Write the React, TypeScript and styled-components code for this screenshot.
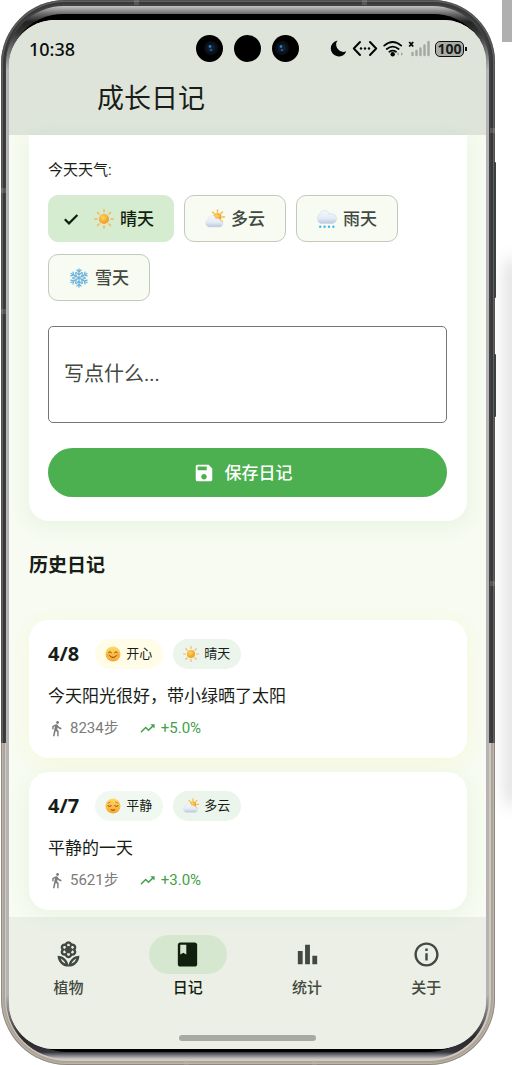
import React, { useState } from "react";
import styled, { createGlobalStyle, css } from "styled-components";
import {
  MdBook,
  MdDirectionsWalk,
  MdInfoOutline,
  MdOutlineLocalFlorist,
  MdSave,
  MdTrendingUp,
} from "react-icons/md";

const GlobalStyle = createGlobalStyle`
  * { box-sizing: border-box; }
  body {
    margin: 0;
    background: #fff;
    color: #181d17;
    font-family: Roboto, "Noto Sans CJK SC", sans-serif;
    overflow-x: hidden;
  }
  svg { display: block; flex: none; }
`;

/* ---------- device ---------- */

const Page = styled.div`
  display: flex;
  overflow: hidden;
`;

const Rim = styled.div`
  position: relative;
  flex: 1;
  min-width: 0;
  margin-left: 1px;
  padding: 6px 6px 6px 5px;
  border-radius: 64px 62px 66px 66px;
  background: linear-gradient(#3f4142 0 743px, #d2c9bd 743px);
  box-shadow: inset 0 0 0 1px rgba(60, 55, 50, 0.35), inset 0 0 0 2px rgba(255, 255, 255, 0.2),
    inset 0 0 0 4px rgba(40, 34, 28, 0.22);
`;

const SideKey = styled.span<{ $top: number; $height: number }>`
  position: absolute;
  right: -1px;
  top: ${(p) => p.$top}px;
  width: 2px;
  height: ${(p) => p.$height}px;
  border-radius: 1px;
  background: #3d3e3f;
`;

const Antenna = styled.span<{ $edge: "left" | "right" | "top" | "bottom"; $at: string }>`
  position: absolute;
  width: 5px;
  height: 5px;
  background: rgba(190, 190, 186, 0.22);
  ${(p) => p.$edge}: 0;
  ${(p) => (p.$edge === "left" || p.$edge === "right" ? "top" : "left")}: ${(p) => p.$at};
`;

const Bezel = styled.div`
  padding: 8px 3px 7px;
  border-radius: 58px 56px 60px 60px;
  background: linear-gradient(
    #c4c4c4,
    #6a6a6a 8px,
    #222 16px,
    #333 26px,
    #b5b3b6 64px,
    #b5b3b6 calc(100% - 64px),
    #2a2a2a calc(100% - 22px),
    #33333a calc(100% - 7px),
    #c9c9cc
  );
`;

const Glass = styled.div`
  padding: 6px 0 3px;
  border-radius: 54px 52px 58px 58px;
  background: linear-gradient(
    #000 16px,
    #b5b3b6 64px,
    #b5b3b6 calc(100% - 64px),
    #000 calc(100% - 14px)
  );
`;

const Screen = styled.div`
  overflow: hidden;
  border-radius: 46px 42px 48px 46px;
  background: #f7fbf1;
`;

const Gutter = styled.div`
  flex: none;
  display: flex;
  flex-direction: column;
  align-items: flex-end;
  gap: 220px;
  width: 17px;
`;

const ScrollThumb = styled.div`
  width: 10px;
  height: 42px;
  background: #b0b0b0;
`;

const NeighbourShadow = styled.div`
  width: 1px;
  height: 540px;
  margin-right: -1px;
  box-shadow: 0 0 18px 2px rgba(0, 0, 0, 0.4);
`;

/* ---------- header ---------- */

const Header = styled.header`
  padding-bottom: 16px;
  background: #dee4da;
`;

const StatusBar = styled.div`
  display: grid;
  grid-template-columns: 1fr auto 1fr;
  align-items: center;
  height: 57px;
  margin-bottom: 2px;
  padding: 0 20px;
`;

const Clock = styled.span`
  font: 500 18px/24px "Noto Sans", sans-serif;
  color: #0a0c0a;
`;

const Cameras = styled.div`
  display: flex;
  gap: 11px;
`;

const StatusIcons = styled.div`
  display: flex;
  justify-content: flex-end;
  align-items: center;
  gap: 5px;
`;

const Battery = styled.span`
  position: relative;
  width: 29px;
  height: 16px;
  border: 1px solid #111;
  border-radius: 5px;
  background: #a9ada6;
  font: 700 14px/14px "Noto Sans", sans-serif;
  text-align: center;
  margin-right: 2px;

  &::after {
    content: "";
    position: absolute;
    right: -4px;
    top: 5px;
    width: 2px;
    height: 4px;
    background: #111;
  }
`;

const Title = styled.h1`
  margin: 0;
  padding: 0 88px;
  font-size: 27px;
  line-height: 40px;
  font-weight: 400;
`;

/* ---------- content ---------- */

const Content = styled.main`
  padding: 0 19px 7px 20px;
`;

const EntryForm = styled.form`
  padding: 25px 20px 24px 19px;
  border-radius: 0 0 20px 20px;
  background: #fff;
  box-shadow: 0 4px 20px rgba(76, 175, 80, 0.1);
`;

const Weather = styled.fieldset`
  margin: 0 0 25px;
  padding: 0;
  border: 0;
`;

const Legend = styled.legend`
  margin-bottom: 15px;
  padding: 0;
  font-size: 15px;
  line-height: 20px;
`;

const Choices = styled.div`
  display: flex;
  flex-wrap: wrap;
  gap: 12px 10px;
`;

const Choice = styled.label<{ $on: boolean }>`
  display: flex;
  align-items: center;
  gap: 6px;
  height: 47px;
  padding: 0 20px;
  border: 1px solid #c2c9bd;
  border-radius: 10px;
  background: #f7fbf1;
  color: #424940;
  font-size: 17px;
  font-weight: 500;
  line-height: 24px;
  cursor: pointer;

  ${(p) =>
    p.$on &&
    css`
      padding: 0 19px 0 12px;
      border-color: #d5ecd0;
      background: #d5ecd0;
      color: #111f0f;
    `}

  input {
    position: absolute;
    opacity: 0;
    pointer-events: none;
  }
`;

const Tick = styled.svg`
  margin-right: 7px;
`;

const Note = styled.textarea`
  display: block;
  width: 100%;
  height: 97px;
  margin-bottom: 25px;
  padding: 33px 15px 30px;
  border: 1px solid #72796f;
  border-radius: 5px;
  background: #fff;
  color: #181d17;
  font: 400 20px/28px Roboto, "Noto Sans CJK SC", sans-serif;
  resize: none;

  &::placeholder {
    color: #424940;
    opacity: 1;
  }
`;

const SaveButton = styled.button`
  display: flex;
  align-items: center;
  justify-content: center;
  gap: 10px;
  width: 100%;
  height: 49px;
  padding: 0 28px 0 18px;
  border: 0;
  border-radius: 25px;
  background: #4caf50;
  color: #fff;
  font: 500 17px/24px Roboto, "Noto Sans CJK SC", sans-serif;
  cursor: pointer;
`;

const SectionTitle = styled.h2`
  margin: 31px 0 40px;
  font-size: 19px;
  line-height: 28px;
  font-weight: 700;
`;

const EntryList = styled.div`
  display: grid;
  gap: 14px;
`;

const Entry = styled.article<{ $glow: string }>`
  padding: 19px 19px 20px;
  border-radius: 20px;
  background: #fff;
  box-shadow: 0 4px 20px ${(p) => p.$glow};
`;

const EntryHead = styled.div`
  display: flex;
  align-items: center;
  gap: 10px;
`;

const EntryDate = styled.h3`
  margin: 0 6px 0 0;
  font: 700 20px/30px "Noto Sans", sans-serif;
`;

const Tag = styled.span<{ $bg: string }>`
  display: flex;
  align-items: center;
  gap: 5px;
  height: 30px;
  padding: 0 11px 0 10px;
  border-radius: 15px;
  background: ${(p) => p.$bg};
  font-size: 13px;
  line-height: 20px;
`;

const EntryText = styled.p`
  margin: 15px 0 10px;
  font-size: 17px;
  line-height: 24px;
`;

const Stats = styled.div`
  display: flex;
  gap: 20px;
`;

const Stat = styled.span<{ $color: string }>`
  display: flex;
  align-items: center;
  gap: 5px;
  color: ${(p) => p.$color};
  font-size: 15px;
  line-height: 20px;
`;

/* ---------- navigation ---------- */

const Footer = styled.footer`
  display: flex;
  flex-direction: column;
  align-items: center;
  padding: 18px 0 8px;
  background: #ebefe6;
`;

const Nav = styled.nav`
  display: grid;
  grid-template-columns: repeat(4, 1fr);
  width: 100%;
  margin-bottom: 38px;
`;

const NavLink = styled.a<{ $on: boolean }>`
  display: flex;
  flex-direction: column;
  align-items: center;
  gap: 5px;
  color: ${(p) => (p.$on ? "#111f0f" : "#424940")};
  font-size: 15px;
  font-weight: 500;
  line-height: 18px;
  text-decoration: none;
`;

const NavPill = styled.span<{ $on: boolean }>`
  display: grid;
  place-items: center;
  width: 78px;
  height: 39px;
  border-radius: 20px;
  background: ${(p) => (p.$on ? "#d5e8cf" : "transparent")};
`;

const HomeBar = styled.div`
  width: 137px;
  height: 6px;
  border-radius: 3px;
  background: #a6aaa2;
`;

/* ---------- drawings ---------- */

type Art = { size: number };

const Gradients = () => (
  <svg width="0" height="0" style={{ position: "absolute" }} aria-hidden="true">
    <defs>
      <radialGradient id="sunFill" cx="40%" cy="35%">
        <stop offset="0" stopColor="#ffd65a" />
        <stop offset="1" stopColor="#f5a32c" />
      </radialGradient>
      <linearGradient id="cloudFill" x1="0" y1="0" x2="0" y2="1">
        <stop offset="0" stopColor="#f6f9fe" />
        <stop offset="0.6" stopColor="#e3ebf5" />
        <stop offset="1" stopColor="#b9c8de" />
      </linearGradient>
      <linearGradient id="faceFill" x1="0" y1="0" x2="0" y2="1">
        <stop offset="0" stopColor="#ffd964" />
        <stop offset="1" stopColor="#f9a52f" />
      </linearGradient>
    </defs>
  </svg>
);

const Rays = ({ cx, cy, inner, outer }: { cx: number; cy: number; inner: number; outer: number }) => (
  <g stroke="#f7b84a" strokeWidth="1.5" strokeLinecap="round">
    {[0, 45, 90, 135, 180, 225, 270, 315].map((a) => (
      <line key={a} x1={cx} y1={cy - inner} x2={cx} y2={cy - outer} transform={`rotate(${a} ${cx} ${cy})`} />
    ))}
  </g>
);

const Sun = ({ size }: Art) => (
  <svg width={size} height={size} viewBox="0 0 20 20" aria-hidden="true">
    <Rays cx={10} cy={10} inner={7} outer={9.2} />
    <circle cx="10" cy="10" r="5.1" fill="url(#sunFill)" />
  </svg>
);

const PartlyCloudy = ({ size }: Art) => (
  <svg width={size} height={size} viewBox="0 0 20 20" aria-hidden="true">
    <Rays cx={12.5} cy={8} inner={5} outer={7} />
    <circle cx="12.5" cy="8" r="4" fill="url(#sunFill)" />
    <path
      d="M4.7 18C2.2 18 .6 16.2.6 14c0-2 1.3-3.5 3-3.8C3.8 7.9 5.2 6.7 7.1 6.7c2 0 3.4 1.2 3.7 3.2.5-.3 1-.4 1.7-.4 1.5 0 2.5.8 2.8 2.2 1.6.2 2.5 1.5 2.5 3 0 1.900-1.200 3.300-3.100 3.300z"
      fill="url(#cloudFill)"
      stroke="#d2dcea"
      strokeWidth=".4"
    />
  </svg>
);

const Rain = ({ size }: Art) => (
  <svg width={size} height={size} viewBox="0 0 20 20" aria-hidden="true">
    <path
      d="M5 14.5C2.2 14.5.5 12.3.5 9.4.5 6.5 2 4.800 3.300 4.400 4 2.600 5.600 1.600 7.500 1.600c2.500 0 4.300 1.600 4.700 3.900.7-.5 1.400-.7 2.200-.7 2.900 0 5.100 2 5.100 4.700 0 3-2 5-4.800 5z"
      fill="url(#cloudFill)"
      stroke="#c8d4e4"
      strokeWidth=".5"
    />
    <g fill="#46b5ea">
      <circle cx="3.2" cy="17.7" r="1.2" />
      <circle cx="7.6" cy="17.7" r="1.2" />
      <circle cx="12" cy="17.7" r="1.2" />
      <circle cx="16.4" cy="17.7" r="1.2" />
    </g>
  </svg>
);

const Snow = ({ size }: Art) => (
  <svg width={size} height={size} viewBox="0 0 20 20" aria-hidden="true">
    <g fill="none" stroke="#6db2dc" strokeWidth="1.2" strokeLinecap="round">
      {[0, 60, 120, 180, 240, 300].map((a) => (
        <path key={a} d="M10 10V.8M7.8 1.8 10 4l2.2-2.2M7.3 4.4 10 7.1l2.7-2.7" transform={`rotate(${a} 10 10)`} />
      ))}
    </g>
  </svg>
);

const Happy = ({ size }: Art) => (
  <svg width={size} height={size} viewBox="0 0 16 16" aria-hidden="true">
    <circle cx="8" cy="8" r="7.5" fill="url(#faceFill)" />
    <circle cx="3" cy="9" r="1.6" fill="#f4772c" opacity=".3" />
    <circle cx="13" cy="9" r="1.6" fill="#f4772c" opacity=".3" />
    <path
      d="M3.6 6.6q1.4-2 2.8 0M9.6 6.6q1.4-2 2.8 0M4.6 9.6q3.4 4 6.8 0"
      fill="none"
      stroke="#7a4617"
      strokeWidth="1"
      strokeLinecap="round"
    />
  </svg>
);

const Calm = ({ size }: Art) => (
  <svg width={size} height={size} viewBox="0 0 16 16" aria-hidden="true">
    <circle cx="8" cy="8" r="7.5" fill="url(#faceFill)" />
    <path
      d="M3 7.8q1.6 1.5 3.2 0M9.8 7.8q1.6 1.5 3.2 0M6.3 11.9q1.7.9 3.4 0"
      fill="none"
      stroke="#7a4617"
      strokeWidth="1"
      strokeLinecap="round"
    />
    <path
      d="M3.2 5.1q1.2-.2 2.2-1.1M12.8 5.1q-1.2-.2-2.2-1.1"
      fill="none"
      stroke="#a8641e"
      strokeWidth=".7"
      strokeLinecap="round"
    />
  </svg>
);

const Bars = ({ size }: Art) => (
  <svg width={size} height={size} viewBox="0 0 24 24" fill="currentColor" aria-hidden="true">
    <path d="M4 9h4v11H4zM10 4h4v16h-4zM16 13h4v7h-4z" />
  </svg>
);

const Lens = ({ glint }: { glint: number }) => (
  <svg width="27" height="27" viewBox="0 0 27 27" aria-hidden="true">
    <circle cx="13.5" cy="13.5" r="13.5" fill="#000" />
    {glint > 0 && (
      <g>
        <circle cx={glint} cy="13" r="7" fill="#0c1014" />
        <circle cx={glint} cy="13" r="4" fill="#0b2039" />
        <circle cx={glint - 1} cy="11.5" r="1.3" fill="#3f86c4" />
        <circle cx={glint} cy="15" r="1" fill="#2b6cab" />
      </g>
    )}
  </svg>
);

const Moon = () => (
  <svg width="17" height="17" viewBox="0 0 17 17" aria-hidden="true">
    <path d="M7.5.6A8 8 0 1 0 16.3 11.2 7.2 7.2 0 0 1 7.5.6z" fill="#050605" />
  </svg>
);

const Link = () => (
  <svg width="26" height="17" viewBox="0 0 26 17" aria-hidden="true">
    <path
      d="M8 2 1.8 8.5 8 15M18 2l6.2 6.5L18 15"
      fill="none"
      stroke="#050605"
      strokeWidth="2"
      strokeLinecap="round"
      strokeLinejoin="round"
    />
    <g fill="#050605">
      <circle cx="9" cy="8.5" r="1.2" />
      <circle cx="13" cy="8.5" r="1.2" />
      <circle cx="17" cy="8.5" r="1.2" />
    </g>
  </svg>
);

const Wifi = () => (
  <svg width="20" height="17" viewBox="0 0 20 17" aria-hidden="true">
    <g fill="none" stroke="#050605" strokeWidth="1.8" strokeLinecap="round">
      <path d="M1.2 5.6q8.5-7.2 17 0M3.8 9q5.9-4.8 11.8 0" />
      <path d="M6.4 11.8q3.3-2.4 6.6 0" />
    </g>
    <circle cx="9.7" cy="14.3" r="2.2" fill="#050605" />
    <path d="m13.8 14 2-1.7v3.4zM20 14l-2-1.7v3.4z" fill="#9fa59c" />
  </svg>
);

const Signal = () => (
  <svg width="22" height="17" viewBox="0 0 22 17" aria-hidden="true">
    <path d="M1.2 2l4 4.5M5.2 2l-4 4.5" stroke="#050605" strokeWidth="1.8" />
    <path
      d="M4.5 13v2M8.5 11v4M12.5 8.5V15M16.5 5.5V15M20.5 2v13"
      stroke="#a3a8a0"
      strokeWidth="2.4"
      strokeLinecap="round"
    />
  </svg>
);

/* ---------- data ---------- */

const weathers = [
  { name: "晴天", Icon: Sun },
  { name: "多云", Icon: PartlyCloudy },
  { name: "雨天", Icon: Rain },
  { name: "雪天", Icon: Snow },
];

const entries = [
  {
    date: "4/8",
    mood: "开心",
    Mood: Happy,
    moodBg: "#fffde7",
    weather: "晴天",
    Sky: Sun,
    text: "今天阳光很好，带小绿晒了太阳",
    steps: 8234,
    growth: "+5.0%",
    glow: "rgba(255, 235, 59, 0.12)",
  },
  {
    date: "4/7",
    mood: "平静",
    Mood: Calm,
    moodBg: "#f0f8f1",
    weather: "多云",
    Sky: PartlyCloudy,
    text: "平静的一天",
    steps: 5621,
    growth: "+3.0%",
    glow: "rgba(129, 199, 132, 0.12)",
  },
];

const tabs = [
  { name: "植物", icon: <MdOutlineLocalFlorist size={29} /> },
  { name: "日记", icon: <MdBook size={29} /> },
  { name: "统计", icon: <Bars size={29} /> },
  { name: "关于", icon: <MdInfoOutline size={29} /> },
];

export default function App() {
  const [weather, setWeather] = useState("晴天");
  const [tab, setTab] = useState("日记");

  return (
    <Page>
      <GlobalStyle />
      <Gradients />
      <Rim>
        <SideKey $top={162} $height={136} />
        <SideKey $top={354} $height={63} />
        <Antenna $edge="top" $at="27%" />
        <Antenna $edge="top" $at="73%" />
        <Antenna $edge="left" $at="188px" />
        <Antenna $edge="left" $at="309px" />
        <Antenna $edge="right" $at="128px" />
        <Antenna $edge="right" $at="581px" />
        <Antenna $edge="bottom" $at="37%" />
        <Antenna $edge="bottom" $at="63%" />
        <Bezel>
          <Glass>
            <Screen>
              <Header>
                <StatusBar>
                  <Clock>10:38</Clock>
                  <Cameras>
                    <Lens glint={15} />
                    <Lens glint={0} />
                    <Lens glint={10} />
                  </Cameras>
                  <StatusIcons>
                    <Moon />
                    <Link />
                    <Wifi />
                    <Signal />
                    <Battery>100</Battery>
                  </StatusIcons>
                </StatusBar>
                <Title>成长日记</Title>
              </Header>

              <Content>
                <EntryForm onSubmit={(e) => e.preventDefault()}>
                  <Weather>
                    <Legend>今天天气:</Legend>
                    <Choices>
                      {weathers.map(({ name, Icon }) => (
                        <Choice key={name} $on={weather === name}>
                          <input
                            type="radio"
                            name="weather"
                            value={name}
                            checked={weather === name}
                            onChange={() => setWeather(name)}
                          />
                          {weather === name && (
                            <Tick width="20" height="20" viewBox="0 0 20 20" aria-hidden="true">
                              <path d="M3.8 10.2 8 14.400 16.400 6" fill="none" stroke="currentColor" strokeWidth="2.2" />
                            </Tick>
                          )}
                          <Icon size={20} />
                          {name}
                        </Choice>
                      ))}
                    </Choices>
                  </Weather>
                  <Note placeholder="写点什么..." aria-label="写点什么" />
                  <SaveButton type="submit">
                    <MdSave size={22} />
                    保存日记
                  </SaveButton>
                </EntryForm>

                <SectionTitle>历史日记</SectionTitle>
                <EntryList>
                  {entries.map(({ Mood, Sky, ...e }) => (
                    <Entry key={e.date} $glow={e.glow}>
                      <EntryHead>
                        <EntryDate>{e.date}</EntryDate>
                        <Tag $bg={e.moodBg}>
                          <Mood size={16} />
                          {e.mood}
                        </Tag>
                        <Tag $bg="#ebf5ec">
                          <Sky size={16} />
                          {e.weather}
                        </Tag>
                      </EntryHead>
                      <EntryText>{e.text}</EntryText>
                      <Stats>
                        <Stat $color="#7b7b7b">
                          <MdDirectionsWalk size={17} />
                          {e.steps}步
                        </Stat>
                        <Stat $color="#43a047">
                          <MdTrendingUp size={17} />
                          {e.growth}
                        </Stat>
                      </Stats>
                    </Entry>
                  ))}
                </EntryList>
              </Content>

              <Footer>
                <Nav>
                  {tabs.map((t) => (
                    <NavLink key={t.name} href="#" $on={tab === t.name} onClick={() => setTab(t.name)}>
                      <NavPill $on={tab === t.name}>{t.icon}</NavPill>
                      {t.name}
                    </NavLink>
                  ))}
                </Nav>
                <HomeBar />
              </Footer>
            </Screen>
          </Glass>
        </Bezel>
      </Rim>
      <Gutter>
        <ScrollThumb />
        <NeighbourShadow />
      </Gutter>
    </Page>
  );
}
